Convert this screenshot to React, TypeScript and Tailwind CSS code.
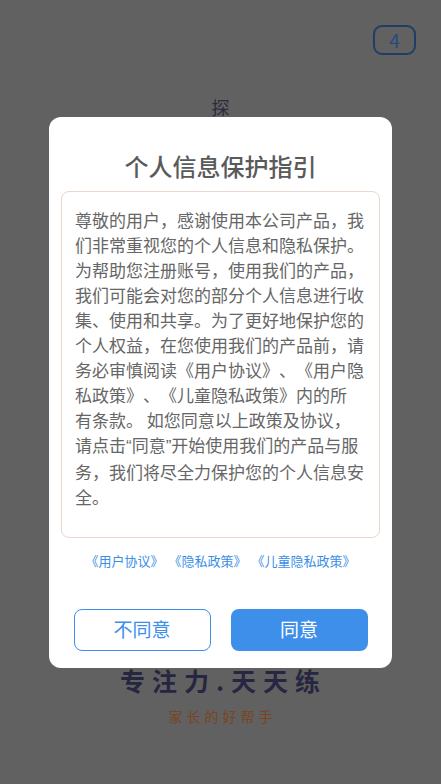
import React from "react";

const font = { fontFamily: '"Noto Sans CJK SC", "Noto Sans", sans-serif' };
const latin = { fontFamily: '"Liberation Sans", sans-serif' };

export default function App() {
  return (
    <div className="relative h-[784px] w-full overflow-hidden bg-[#616161]" style={font}>
      {/* underlying page */}
      <div className="flex h-full flex-col items-center">
        <div className="mt-[95px] text-[18px] leading-[24px] text-[#2a2a40]">探</div>
        <div className="mt-[546px] pl-[6px] text-[25px] font-bold leading-[30px] tracking-[7px] text-[#262640]">
          专注力.天天练
        </div>
        <div className="mt-[11px] pl-[4px] text-[14px] leading-[20px] tracking-[4px] text-[#7a4520]">
          家长的好帮手
        </div>
      </div>

      {/* skip countdown */}
      <div className="absolute right-[25px] top-[25px] flex h-[30px] w-[43px] items-center justify-center rounded-[9px] border-2 border-[#1f3d66] text-[19px] text-[#234b80]">
        4
      </div>

      {/* dialog */}
      <div className="absolute inset-0 flex items-center justify-center">
        <div className="flex w-[343px] flex-col items-center rounded-[12px] bg-white px-[12px] pb-[17px] pt-[32px]">
          <div className="text-[24px] font-medium leading-[34px] text-[#5a5a5a]">个人信息保护指引</div>
          <div className="mt-[8px] flex h-[347px] w-[319px] flex-col whitespace-nowrap rounded-[8px] border border-[#ead7ce] pl-[13px] pr-[10px] pt-[15px] text-[17px] leading-[25px] text-[#666666] [text-spacing-trim:space-all]">
            <div>尊敬的用户，感谢使用本公司产品，我</div>
            <div>们非常重视您的个人信息和隐私保护。</div>
            <div>为帮助您注册账号，使用我们的产品，</div>
            <div>我们可能会对您的部分个人信息进行收</div>
            <div>集、使用和共享。为了更好地保护您的</div>
            <div>个人权益，在您使用我们的产品前，请</div>
            <div>务必审慎阅读《用户协议》、《用户隐</div>
            <div>私政策》、《儿童隐私政策》内的所</div>
            <div>有条款。 如您同意以上政策及协议，</div>
            <div>
              请点击<span style={latin}>“</span>同意<span style={latin}>”</span>开始使用我们的产品与服
            </div>
            <div>务，我们将尽全力保护您的个人信息安</div>
            <div>全。</div>
          </div>
          <div className="mt-[13px] flex gap-[5px] text-[13px] leading-[20px] text-[#3a8ee6] [text-spacing-trim:space-all]">
            <span>《用户协议》</span>
            <span>《隐私政策》</span>
            <span>《儿童隐私政策》</span>
          </div>
          <div className="mt-[38px] flex w-full justify-center gap-[20px]">
            <button className="flex h-[42px] w-[137px] items-center justify-center rounded-[8px] border border-[#3d8fea] text-[19px] text-[#3d8fea]">
              不同意
            </button>
            <button className="flex h-[42px] w-[137px] items-center justify-center rounded-[8px] bg-[#3e8fea] text-[19px] text-white">
              同意
            </button>
          </div>
        </div>
      </div>
    </div>
  );
}
